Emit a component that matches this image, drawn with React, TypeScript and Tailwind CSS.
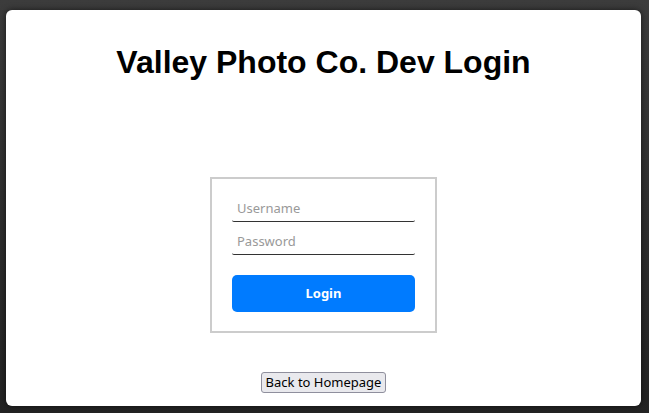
import { useState } from "react";

const App = () => {
  const [username, setUsername] = useState("");
  const [password, setPassword] = useState("");

  return (
    <div className="h-[413px] w-[649px] overflow-hidden bg-gradient-to-b from-[#3c3c3c] to-[#232323] pt-[10px] pl-[6px] pr-[8px] pb-[7px]">
      <div className="flex h-full w-full flex-col items-center rounded-[6px] bg-white shadow-[0_0_6px_rgba(0,0,0,0.6)]">
        <h1 className="mt-[33px] text-[32px] leading-[38px] font-bold text-black font-['Liberation_Sans',Arial,sans-serif]">
          Valley Photo Co. Dev Login
        </h1>

        <form
          onSubmit={(e) => e.preventDefault()}
          className="mt-[96px] flex w-[227px] flex-col border-2 border-[#cccccc] px-[20px] pt-[17px] pb-[19px] font-['Noto_Sans',sans-serif]"
        >
          <input
            type="text"
            value={username}
            onChange={(e) => setUsername(e.target.value)}
            placeholder="Username"
            className="h-[26px] w-full rounded-[2px] border-b border-[#333] px-[5px] pb-[2px] text-[13px] text-black outline-none placeholder:text-[#999]"
          />
          <input
            type="password"
            value={password}
            onChange={(e) => setPassword(e.target.value)}
            placeholder="Password"
            className="mt-[7px] h-[26px] w-full rounded-[2px] border-b border-[#333] px-[5px] pb-[2px] text-[13px] text-black outline-none placeholder:text-[#999]"
          />
          <button
            type="submit"
            className="mt-[20px] h-[37px] w-full rounded-[5px] bg-[#007bff] text-[13px] font-bold text-white"
          >
            Login
          </button>
        </form>

        <button className="mt-[39px] h-[21px] rounded-[3px] border border-[#8f8f9d] bg-[#e9e9ed] px-[4px] text-[13px] leading-[19px] text-black font-['Noto_Sans',sans-serif]">
          Back to Homepage
        </button>
      </div>
    </div>
  );
};

export default App;
